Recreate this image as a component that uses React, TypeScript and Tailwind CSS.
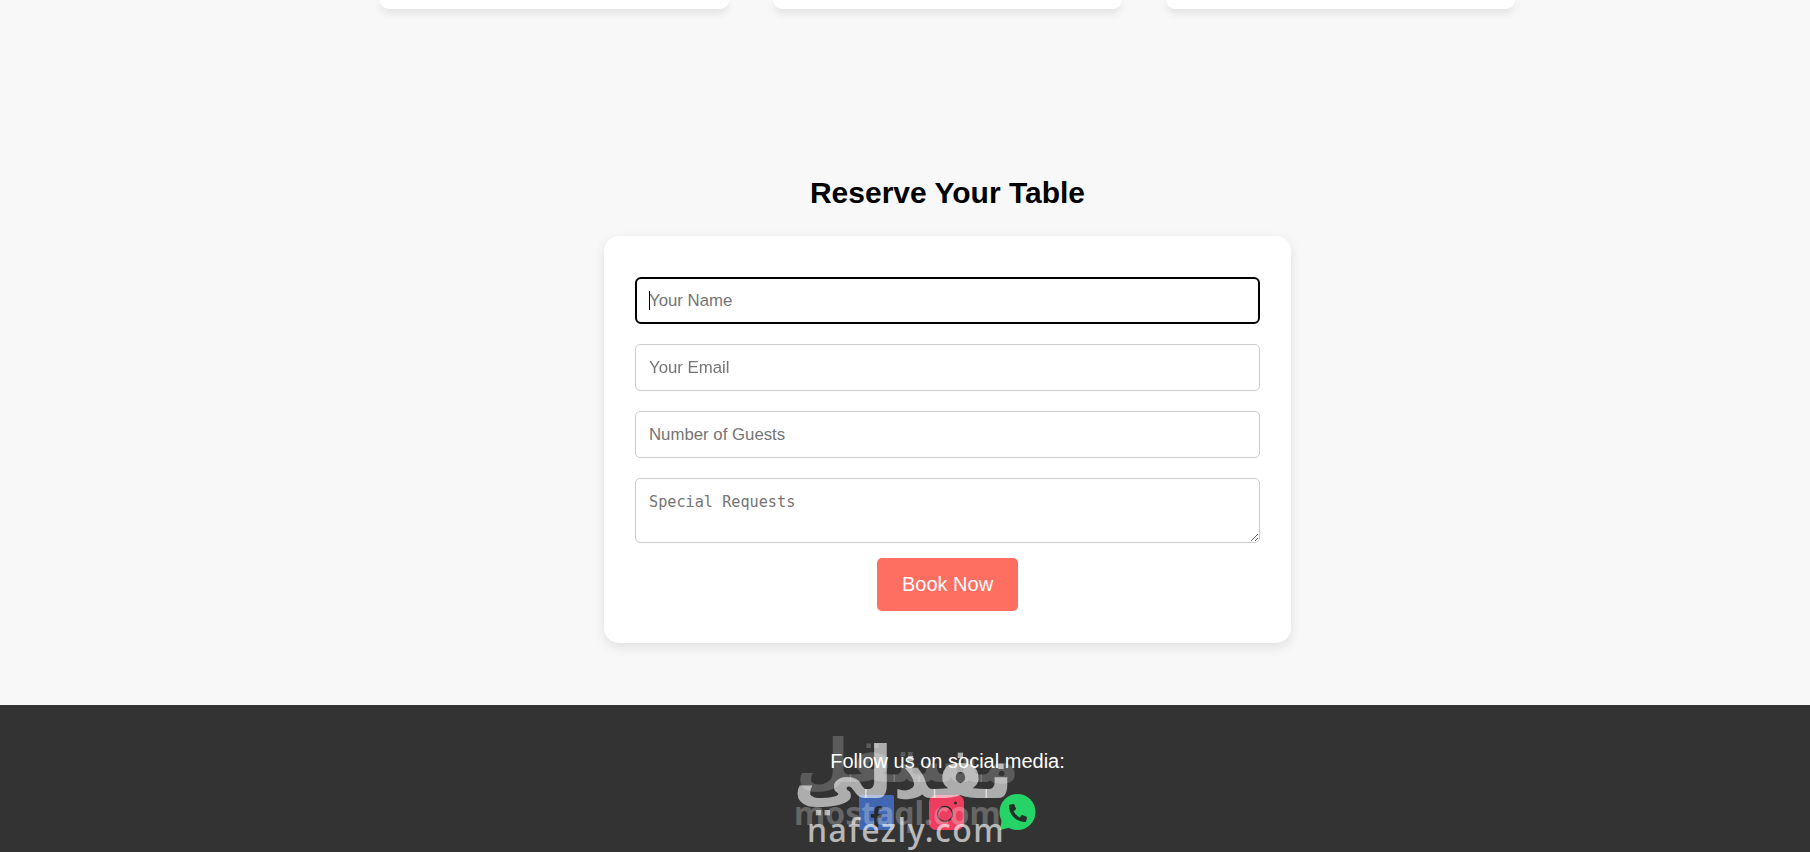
import { FaFacebookF, FaPhoneAlt } from "react-icons/fa";

function TopCard() {
  return (
    <div className="h-[9px] w-[349px] rounded-b-[15px] bg-white shadow-[0_4px_8px_rgba(0,0,0,0.1)]" />
  );
}

function Field({ placeholder, focused }: { placeholder: string; focused?: boolean }) {
  return (
    <div className="relative">
      <input
        type="text"
        placeholder={placeholder}
        autoFocus={focused}
        className="h-[47px] w-full rounded-[5px] border border-[#ccc] bg-white px-[13px] text-[16.8px] text-black caret-transparent outline-none placeholder:text-[#757575] focus:rounded-[6px] focus:border-2 focus:border-black focus:px-[12px]"
      />
      {focused && <span className="absolute top-[14px] left-[14px] h-[19px] w-px bg-black" />}
    </div>
  );
}

function InstagramIcon() {
  return (
    <svg viewBox="0 0 35 35" className="h-[35px] w-[35px]">
      <rect width="35" height="35" rx="7" fill="#ee3e5f" />
      <circle cx="16" cy="19" r="7.5" fill="none" stroke="#33272b" strokeWidth="1.3" />
      <circle cx="26.5" cy="8" r="1.5" fill="#33272b" />
    </svg>
  );
}

function WhatsappIcon() {
  return (
    <span className="relative flex h-[37px] w-[37px] items-center justify-center">
      <svg viewBox="0 0 37 37" className="absolute inset-0 h-[37px] w-[37px]">
        <circle cx="18.5" cy="18" r="18" fill="#25d366" />
        <path d="M3 24 L1 36 L13 33 Z" fill="#25d366" />
      </svg>
      <FaPhoneAlt className="relative text-[18px] text-[#20302a]" />
    </span>
  );
}

export default function App() {
  return (
    <div className="relative flex h-[852px] flex-col overflow-hidden bg-[#f8f8f8] font-['Liberation_Sans',Arial,sans-serif]">
      <div className="flex justify-center gap-[44px] pl-[85px]">
        <TopCard />
        <TopCard />
        <TopCard />
      </div>

      <section className="flex flex-1 flex-col items-center pt-[165px] pl-[85px]">
        <h2 className="text-[30px] leading-[37px] font-bold text-black">Reserve Your Table</h2>
        <form className="mt-[25px] flex w-[687px] flex-col gap-[20px] rounded-[15px] bg-white px-[31px] pt-[41px] pb-[32px] shadow-[0_4px_12px_rgba(0,0,0,0.1)]">
          <Field placeholder="Your Name" focused />
          <Field placeholder="Your Email" />
          <Field placeholder="Number of Guests" />
          <textarea
            placeholder="Special Requests"
            className="-mb-[5px] h-[65px] w-full rounded-[5px] border border-[#ccc] bg-white px-[13px] py-[14px] font-['DejaVu_Sans_Mono',monospace] text-[15.2px] leading-[18px] outline-none placeholder:text-[#757575]"
          />
          <button
            type="button"
            className="h-[53px] w-[141px] self-center rounded-[5px] bg-[#ff6f61] pb-[2px] text-[20px] text-white"
          >
            Book Now
          </button>
        </form>
      </section>

      <footer className="relative flex h-[147px] flex-col items-center bg-[#333] pt-[45px] pl-[85px] text-white">
        <p className="text-[20px] leading-[23px]">Follow us on social media:</p>
        <div className="mt-[21px] flex items-center gap-[35px]">
          <span className="flex h-[35px] w-[35px] items-end justify-center rounded-[2px] bg-[#4267b2] pb-[3px] text-[21px] text-[#26282c]">
            <FaFacebookF />
          </span>
          <InstagramIcon />
          <WhatsappIcon />
        </div>

        {/* watermark over the footer */}
        <div className="pointer-events-none absolute inset-0">
          <span className="absolute top-[20px] left-[796px] font-['DejaVu_Sans',sans-serif] text-[61px] leading-[72px] font-bold text-white/20">
            مستقل
          </span>
          <span className="absolute top-[26px] left-[793px] font-['DejaVu_Sans',sans-serif] text-[72px] leading-[84px] font-bold text-white/60">
            نفذلي
          </span>
          <span className="absolute top-[90px] left-[794px] font-['Noto_Sans',sans-serif] text-[32px] leading-[36px] font-bold text-white/25">
            mostaql.com
          </span>
          <span className="absolute top-[107px] left-[807px] font-['Noto_Sans',sans-serif] text-[32px] leading-[36px] font-medium tracking-[1.5px] text-white/65">
            nafezly.com
          </span>
        </div>
      </footer>
    </div>
  );
}
